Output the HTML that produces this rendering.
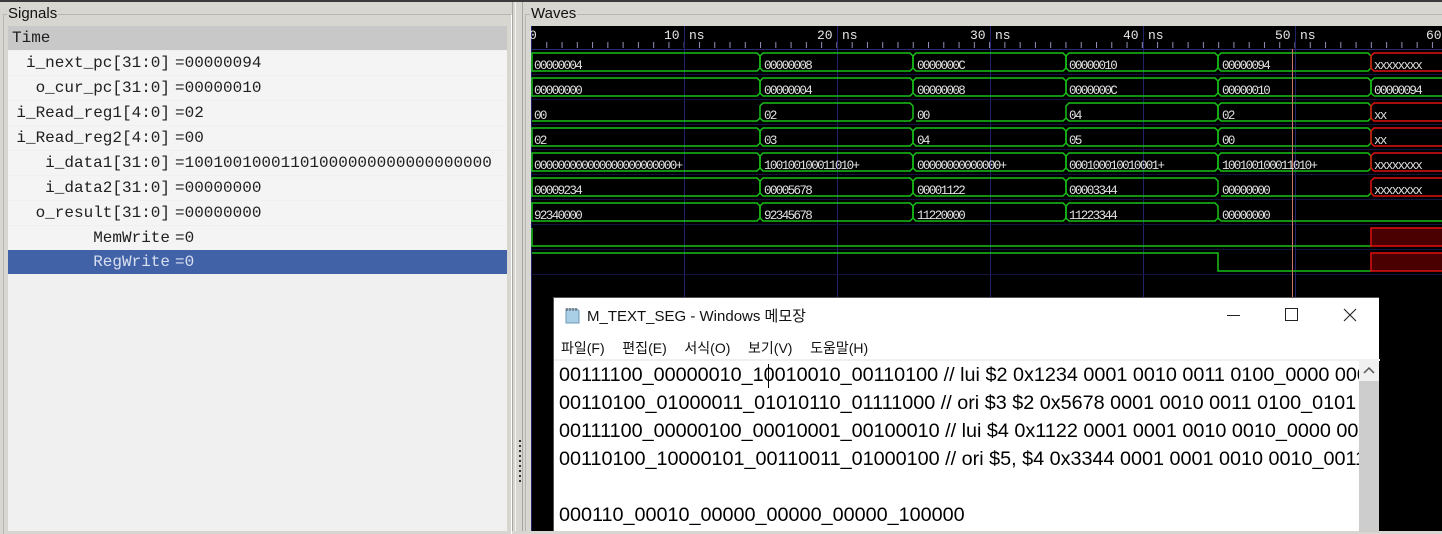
<!DOCTYPE html>
<html><head><meta charset="utf-8"><style>
*{margin:0;padding:0;box-sizing:border-box}
body{width:1442px;height:531px;overflow:hidden;background:#d8d6d1;position:relative;font-family:"Liberation Sans",sans-serif}
.abs{position:absolute}
.sig{position:absolute;left:8px;width:499px;height:24px;background:#f4f4f4;font-family:"Liberation Mono",monospace;font-size:16px;color:#202020;line-height:24px}
.sig .n{position:absolute;right:337px;white-space:pre}
.sig .v{position:absolute;left:167px;white-space:pre}
.np{font-family:"Liberation Sans","Noto Sans CJK KR",sans-serif}
.code div{height:28px;line-height:28px;white-space:pre}
</style></head><body>
<div class="abs" style="left:0;top:0;width:1442px;height:2px;background:#3a3a3a"></div>
<div class="abs" style="left:3px;top:14px;width:509px;height:520px;border:1px solid #b8b6b0;border-right-color:#fff;border-bottom:none"></div>
<div class="abs" style="left:7px;top:5px;font-size:15px;background:#d8d6d1;padding:0 1px;color:#111">Signals</div>
<div class="abs" style="left:8px;top:26px;width:499px;height:505px;background:#f0f0f0"></div>
<div class="sig" style="top:26px;background:#c8c8c8;"><span style="position:absolute;left:4px">Time</span></div>
<div class="sig" style="top:51px"><span class="n">i_next_pc[31:0]</span><span class="v">=00000094</span></div>
<div class="sig" style="top:76px"><span class="n">o_cur_pc[31:0]</span><span class="v">=00000010</span></div>
<div class="sig" style="top:101px"><span class="n">i_Read_reg1[4:0]</span><span class="v">=02</span></div>
<div class="sig" style="top:126px"><span class="n">i_Read_reg2[4:0]</span><span class="v">=00</span></div>
<div class="sig" style="top:151px"><span class="n">i_data1[31:0]</span><span class="v">=10010010001101000000000000000000</span></div>
<div class="sig" style="top:176px"><span class="n">i_data2[31:0]</span><span class="v">=00000000</span></div>
<div class="sig" style="top:201px"><span class="n">o_result[31:0]</span><span class="v">=00000000</span></div>
<div class="sig" style="top:226px"><span class="n">MemWrite</span><span class="v">=0</span></div>
<div class="sig" style="top:250px;background:#4262a8;color:#d8e0f0"><span class="n">RegWrite</span><span class="v">=0</span></div>
<div class="abs" style="left:512px;top:2px;width:1px;height:529px;background:#a8a6a0"></div>
<div class="abs" style="left:515px;top:2px;width:1px;height:529px;background:#f4f4f0"></div>
<div class="abs" style="left:522px;top:2px;width:1px;height:529px;background:#a8a6a0"></div>
<div class="abs" style="left:525px;top:14px;width:1px;height:517px;background:#b8b6b0"></div>
<div class="abs" style="left:519px;top:440px;width:2px;height:42px;background:repeating-linear-gradient(#333 0 2px,transparent 2px 5px)"></div>
<div class="abs" style="left:525px;top:14px;width:917px;height:1px;background:#b8b6b0"></div>
<div class="abs" style="left:530px;top:5px;font-size:15px;background:#d8d6d1;padding:0 1px;color:#111">Waves</div>
<svg class="abs" style="left:0;top:0" width="1442" height="531" font-family="Liberation Mono,monospace">
<defs>
<pattern id="tk" x="531" y="0" width="15.27" height="531" patternUnits="userSpaceOnUse"><rect x="0" y="42" width="1" height="6" fill="#9090b8"/></pattern>
</defs>
<rect x="531" y="26" width="911" height="505" fill="#000"/>
<rect x="531" y="26" width="911" height="24" fill="url(#tk)"/>
<line x1="531" y1="49.5" x2="1442" y2="49.5" stroke="#2a2a70"/>
<g stroke="#22226a" stroke-width="1">
<line x1="531.5" y1="26" x2="531.5" y2="531"/>
<line x1="684.5" y1="26" x2="684.5" y2="531"/>
<line x1="837.5" y1="26" x2="837.5" y2="531"/>
<line x1="990.5" y1="26" x2="990.5" y2="531"/>
<line x1="1143.5" y1="26" x2="1143.5" y2="531"/>
<line x1="1295.5" y1="26" x2="1295.5" y2="531"/>
</g>
<g stroke="#141440" stroke-width="1">
<line x1="531" y1="74.5" x2="1442" y2="74.5"/><line x1="531" y1="99.5" x2="1442" y2="99.5"/>
<line x1="531" y1="124.5" x2="1442" y2="124.5"/><line x1="531" y1="149.5" x2="1442" y2="149.5"/>
<line x1="531" y1="174.5" x2="1442" y2="174.5"/><line x1="531" y1="199.5" x2="1442" y2="199.5"/>
<line x1="531" y1="224.5" x2="1442" y2="224.5"/><line x1="531" y1="249.5" x2="1442" y2="249.5"/>
<line x1="531" y1="274.5" x2="1442" y2="274.5"/>
</g>
<g fill="#e8e8e8" font-size="13">
<text x="529" y="39">0</text>
<text x="664" y="39">10</text><text x="689" y="39">ns</text>
<text x="817" y="39">20</text><text x="842" y="39">ns</text>
<text x="970" y="39">30</text><text x="995" y="39">ns</text>
<text x="1123" y="39">40</text><text x="1148" y="39">ns</text>
<text x="1275" y="39">50</text><text x="1300" y="39">ns</text>
<text x="1426" y="39">60</text>
</g>
<g fill="none" stroke="#18c018" stroke-width="1.5">
<path d="M532 53H757L760 56V68L757 71H532Z"/><path d="M763 53H910L913 56V68L910 71H763L760 68V56Z"/><path d="M916 53H1063L1066 56V68L1063 71H916L913 68V56Z"/><path d="M1069 53H1215L1218 56V68L1215 71H1069L1066 68V56Z"/><path d="M1221 53H1368L1371 56V68L1368 71H1221L1218 68V56Z"/>
<path d="M532 78H757L760 81V93L757 96H532Z"/>
<path d="M763 78H910L913 81V93L910 96H763L760 93V81Z"/><path d="M916 78H1063L1066 81V93L1063 96H916L913 93V81Z"/><path d="M1069 78H1215L1218 81V93L1215 96H1069L1066 93V81Z"/><path d="M1221 78H1368L1371 81V93L1368 96H1221L1218 93V81Z"/><path d="M1374 78H1442M1374 96H1442M1374 78L1371 81V93L1374 96"/>
<path d="M532 121H757L760 118M763 103H910L913 106V118L910 121H763L760 118V106Z"/><path d="M916 121H1063L1066 118V106L1069 103H1215L1218 106V118L1215 121H1069L1066 118"/><path d="M1221 103H1368L1371 106V118L1368 121H1221L1218 118V106Z"/>
<path d="M532 128H757L760 131V143L757 146H532Z"/><path d="M763 128H910L913 131V143L910 146H763L760 143V131Z"/><path d="M916 128H1063L1066 131V143L1063 146H916L913 143V131Z"/><path d="M1069 128H1215L1218 131V143L1215 146H1069L1066 143V131Z"/><path d="M1221 128H1368L1371 131V143L1368 146H1221L1218 143V131Z"/>
<path d="M532 153H757L760 156V168L757 171H532Z"/><path d="M763 153H910L913 156V168L910 171H763L760 168V156Z"/><path d="M916 153H1063L1066 156V168L1063 171H916L913 168V156Z"/><path d="M1069 153H1215L1218 156V168L1215 171H1069L1066 168V156Z"/><path d="M1221 153H1368L1371 156V168L1368 171H1221L1218 168V156Z"/>
<path d="M532 178H757L760 181V193L757 196H532Z"/><path d="M763 178H910L913 181V193L910 196H763L760 193V181Z"/><path d="M916 178H1063L1066 181V193L1063 196H916L913 193V181Z"/><path d="M1069 178H1215L1218 181V193L1215 196H1069L1066 193V181Z"/><path d="M1221 196H1368L1371 193"/>
<path d="M532 203H757L760 206V218L757 221H532Z"/><path d="M763 203H910L913 206V218L910 221H763L760 218V206Z"/><path d="M916 203H1063L1066 206V218L1063 221H916L913 218V206Z"/><path d="M1069 203H1215L1218 206V218L1215 221H1069L1066 218V206Z"/><path d="M1221 221H1442M1218 218L1221 221"/>
<path d="M532 228V246H1371"/>
<path d="M532 253H1218V271H1371"/>
</g>
<g fill="none" stroke="#e01010" stroke-width="1.5">
<path d="M1442 53H1374L1371 56V68L1374 71H1442"/>
<path d="M1442 103H1374L1371 106V118L1374 121H1442"/>
<path d="M1442 128H1374L1371 131V143L1374 146H1442"/>
<path d="M1442 153H1374L1371 156V168L1374 171H1442"/>
<path d="M1442 178H1374L1371 181V193L1374 196H1442"/>
<rect x="1371" y="228" width="80" height="18" fill="#4a0000"/>
<rect x="1371" y="253" width="80" height="18" fill="#4a0000"/>
</g>
<line x1="1292.5" y1="49" x2="1292.5" y2="297" stroke="#c87868" stroke-width="1"/>
<g fill="#e0e0e0" font-size="12.5" letter-spacing="-1.6">
<text x="534" y="69">00000004</text><text x="764" y="69">00000008</text><text x="917" y="69">0000000C</text><text x="1069" y="69">00000010</text><text x="1222" y="69">00000094</text><text x="1374" y="69">xxxxxxxx</text>
<text x="534" y="94">00000000</text><text x="764" y="94">00000004</text><text x="917" y="94">00000008</text><text x="1069" y="94">0000000C</text><text x="1222" y="94">00000010</text><text x="1374" y="94">00000094</text>
<text x="534" y="119">00</text><text x="764" y="119">02</text><text x="917" y="119">00</text><text x="1069" y="119">04</text><text x="1222" y="119">02</text><text x="1374" y="119">xx</text>
<text x="534" y="144">02</text><text x="764" y="144">03</text><text x="917" y="144">04</text><text x="1069" y="144">05</text><text x="1222" y="144">00</text><text x="1374" y="144">xx</text>
<text x="534" y="169">000000000000000000000000+</text><text x="764" y="169">100100100011010+</text><text x="917" y="169">00000000000000+</text><text x="1069" y="169">000100010010001+</text><text x="1222" y="169">100100100011010+</text><text x="1374" y="169">xxxxxxxx</text>
<text x="534" y="194">00009234</text><text x="764" y="194">00005678</text><text x="917" y="194">00001122</text><text x="1069" y="194">00003344</text><text x="1222" y="194">00000000</text><text x="1374" y="194">xxxxxxxx</text>
<text x="534" y="219">92340000</text><text x="764" y="219">92345678</text><text x="917" y="219">11220000</text><text x="1069" y="219">11223344</text><text x="1222" y="219">00000000</text>
</g>
</svg>
<div class="abs np" style="left:553px;top:297px;width:826px;height:234px;background:#fff;border-left:1px solid #555;border-top:1px solid #555">
  <svg class="abs" style="left:9px;top:8px" width="18" height="18"><path d="M3 3H14L16 5V17H3Z" fill="#a9cfe6" stroke="#6f98b4"/><path d="M4 2V5M7 2V5M10 2V5M13 2V5" stroke="#555"/></svg>
  <div class="abs" style="left:33px;top:7px;font-size:15px;color:#111;white-space:pre">M_TEXT_SEG - Windows 메모장</div>
  <div class="abs" style="left:673px;top:17px;width:13px;height:1px;background:#222"></div>
  <div class="abs" style="left:731px;top:10px;width:13px;height:13px;border:1px solid #222"></div>
  <svg class="abs" style="left:789px;top:10px" width="14" height="14"><path d="M1 1L13 13M13 1L1 13" stroke="#222" stroke-width="1.1"/></svg>
  <div class="abs" style="left:7px;top:40px;font-size:14px;color:#111;white-space:pre;word-spacing:2px">파일(F)   편집(E)   서식(O)   보기(V)   도움말(H)</div>
  <div class="abs" style="left:0;top:61px;width:826px;height:2px;background:#f0f0f0"></div>
  <div class="abs code" style="left:5px;top:63px;width:800px;height:171px;overflow:hidden;font-size:19.8px;color:#000">
    <div>00111100_00000010_10010010_00110100 // lui $2 0x1234 0001 0010 0011 0100_0000 0000</div>
    <div>00110100_01000011_01010110_01111000 // ori $3 $2 0x5678 0001 0010 0011 0100_0101</div>
    <div>00111100_00000100_00010001_00100010 // lui $4 0x1122 0001 0001 0010 0010_0000 0000</div>
    <div>00110100_10000101_00110011_01000100 // ori $5, $4 0x3344 0001 0001 0010 0010_0011</div>
    <div> </div>
    <div>000110_00010_00000_00000_00000_100000</div>
  </div>
  <div class="abs" style="left:214px;top:66px;width:1px;height:24px;background:#000"></div>
  <div class="abs" style="left:805px;top:63px;width:20px;height:171px;background:#f0f0f0"></div>
  <div class="abs" style="left:805px;top:83px;width:20px;height:151px;background:#cdcdcd"></div>
  <svg class="abs" style="left:809px;top:68px" width="12" height="8"><path d="M1 7L6 2L11 7" fill="none" stroke="#555" stroke-width="1.5"/></svg>
</div>
</body></html>
